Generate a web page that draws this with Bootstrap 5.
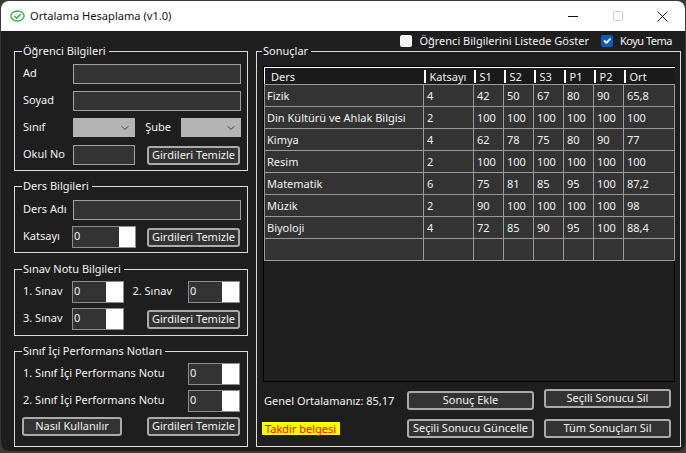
<!DOCTYPE html>
<html lang="tr">
<head>
  <meta charset="UTF-8">
  <title>Ortalama Hesaplama (v1.0)</title>
  <link href="https://cdn.jsdelivr.net/npm/bootstrap@5.3.0/dist/css/bootstrap.min.css" rel="stylesheet">
  <style>
    html, body { height: 100%; }
    body {
      background: #3d3a33;
      font-family: "Noto Sans", "Liberation Sans", sans-serif;
      font-size: 11px;
      line-height: 16px;
      color: #f2f2f2;
      overflow: hidden;
    }
    .app-window {
      width: 684px;
      height: 450px;
      margin: 1px 0 0 1px;
      background: #1e1e1e;
      border-radius: 8px;
      overflow: hidden;
    }
    .title-bar { height: 30px; background: #fff; color: #111; font-size: 11.1px; padding-left: 9px; }
    .title-text { margin-left: 5px; }
    .win-btn { width: 45px; height: 30px; }
    .client { padding: 0 4px 0 13px; }
    .top-options { height: 20px; margin-bottom: -8px; padding-right: 9px; gap: 12px; }
    .top-options .form-check-input {
      width: 12px; height: 12px; margin: 0 7px 0 0; border-radius: 2px; border: 0; background-color: #f4f4f4;
    }
    .top-options .form-check-input:checked { background-color: #0a5cb8; }
    .theme-label { letter-spacing: -.5px; }
    .left-col { width: 235px; }
    .right-col { width: 425px; margin-left: 8px; }
    .group-box {
      border: 1px solid #dcdcdc;
      margin: 0;
      padding: 5px 6px 5px 8px;
      min-width: 0;
    }
    .group-box legend {
      float: none;
      width: auto;
      font-size: 11px;
      line-height: 16px;
      margin: 0 0 0 -1px;
      padding: 0 3px 0 1px;
    }
    .box-lesson { margin-top: 7px; padding-top: 6px; padding-bottom: 4px; }
    .box-exam { margin-top: 8px; padding-top: 4px; }
    .box-perf { margin-top: 7px; padding-top: 4px; padding-bottom: 10px; }
    .group-stack { gap: 7px; }
    .group-stack.mid { gap: 6px; }
    .group-stack.tight { gap: 5px; }
    .group-stack span { padding-bottom: 2px; }
    .row-label { width: 50px; flex: none; }
    .dark-input.form-control {
      height: 20px; min-height: 0; padding: 0 2px; border-radius: 0; font-size: 11px; line-height: 16px;
      background: #333; border: 1px solid #a0a0a0; color: #f2f2f2;
    }
    .w-small { width: 62px; flex: none; }
    .w-small-b { width: 60px; flex: none; }
    .dark-select.form-select {
      height: 19px; padding: 0; margin-bottom: 1px; border: 0; border-radius: 0; background-color: #b4b4b4;
      background-size: 10px 8px; background-position: right 5px center;
    }
    .sube-label { margin: 0 10px 0 auto; }
    .spin-box { height: 22px; flex: none; border: 1px solid #8c8c8c; margin-left: -1px; background: #333; }
    .spin-box .form-control {
      height: 17px; min-height: 0; flex: 1 1 0; width: 0; padding: 0 1px; border: 0; border-radius: 0;
      font-size: 11px; line-height: 14px; background: #333; color: #f2f2f2; align-self: flex-start;
    }
    .spin-box i { display: block; width: 16px; background: #fff; }
    .spin-wide { width: 64px; }
    .spin-narrow { width: 52px; }
    .spin-box.spin-narrow i { width: 17px; }
    .spin-end { margin-right: 1px; margin-left: 0; }
    .push-r { margin-left: auto; }
    .act-btn.btn {
      height: 19px; padding: 0 0 2px; border: 2px solid #aaa; border-radius: 3px; background: #333;
      color: #f2f2f2; font-size: 11px; line-height: 13px; white-space: nowrap;
    }
    .btn-clear { width: 93px; margin-right: 1px; }
    .btn-help { width: 100px; margin-left: -1px; }
    .results-box { padding: 7px 5px 6px 6px; height: 404px; }
    .table-wrap { height: 316px; border: 1px solid #000; background: #1e1e1e; }
    .grade-table { table-layout: fixed; width: 410px; border-collapse: collapse; color: #f2f2f2; margin: 0; }
    .grade-table thead th {
      height: 17px; padding: 0 0 0 6px; font-weight: 400; font-size: 11px; line-height: 15px;
      background: linear-gradient(#fff, #fff) no-repeat 0 2px / 2px 13px, #1a1a1a;
      border-top: 1px solid #fff; border-bottom: 1px solid #999;
    }
    .grade-table thead th:first-child { padding-left: 6px; background: #1a1a1a; border-left: 1px solid #fff; }
    .grade-table tbody td {
      height: 22px; padding: 0 0 0 3px; background: #333; font-size: 11px; line-height: 16px;
      border: 1px solid #999; white-space: nowrap;
    }
    .grade-table tbody td:first-child { padding-left: 2px; }
    .bottom-bar { margin-top: 7px; }
    .info-col { width: 144px; padding-left: 1px; }
    .btn-col { width: 127px; margin-right: 10px; }
    .btn-col .act-btn { width: 127px; }
    .btn-col .act-btn + .act-btn { margin-top: 9px; }
    .btn-col.first-col { padding-top: 2px; }
    .btn-col.last-col .act-btn + .act-btn { margin-top: 11px; }
    .avg-text { margin-top: 4px; }
    .award-text { width: 78px; height: 13px; line-height: 13px; margin: 13px 0 0 -2px; padding-left: 3px; background: #ff0; color: #f00; white-space: nowrap; }
  </style>
</head>
<body>
  <div class="app-window">
    <div class="title-bar d-flex align-items-center">
      <svg width="15" height="12" viewBox="0 0 15 12"><ellipse cx="7.5" cy="6" rx="6.6" ry="5" fill="none" stroke="#35b04a" stroke-width="1.4"/><path d="M4.5 6l2.2 2.2 4-4.2" fill="none" stroke="#35b04a" stroke-width="1.5"/></svg>
      <span class="title-text">Ortalama Hesaplama (v1.0)</span>
      <div class="ms-auto d-flex">
        <div class="win-btn d-flex align-items-center justify-content-center"><svg width="10" height="10" viewBox="0 0 10 10"><path d="M0 5.5h10" stroke="#111"/></svg></div>
        <div class="win-btn d-flex align-items-center justify-content-center"><svg width="10" height="10" viewBox="0 0 10 10"><rect x=".5" y=".5" width="9" height="9" rx="1" fill="none" stroke="#ccc"/></svg></div>
        <div class="win-btn d-flex align-items-center justify-content-center"><svg width="11" height="11" viewBox="0 0 11 11"><path d="M.5.5l10 10M10.5.5l-10 10" stroke="#111"/></svg></div>
      </div>
    </div>
    <div class="client">
      <div class="top-options d-flex justify-content-end align-items-center">
        <div class="d-flex align-items-center">
          <input class="form-check-input" type="checkbox" id="showStudent">
          <label for="showStudent">Öğrenci Bilgilerini Listede Göster</label>
        </div>
        <div class="d-flex align-items-center">
          <input class="form-check-input" type="checkbox" id="darkTheme" checked>
          <label class="theme-label" for="darkTheme">Koyu Tema</label>
        </div>
      </div>
      <div class="d-flex">
        <div class="left-col d-flex flex-column">
          <fieldset class="group-box">
            <legend>Öğrenci Bilgileri</legend>
            <div class="group-stack d-flex flex-column">
              <div class="d-flex align-items-center"><span class="row-label">Ad</span><input class="form-control dark-input"></div>
              <div class="d-flex align-items-center"><span class="row-label">Soyad</span><input class="form-control dark-input"></div>
              <div class="d-flex align-items-center">
                <span class="row-label">Sınıf</span>
                <select class="form-select dark-select w-small"></select>
                <span class="sube-label">Şube</span>
                <select class="form-select dark-select w-small-b"></select>
              </div>
              <div class="d-flex align-items-center">
                <span class="row-label">Okul No</span>
                <input class="form-control dark-input w-small">
                <button class="btn act-btn btn-clear push-r">Girdileri Temizle</button>
              </div>
            </div>
          </fieldset>
          <fieldset class="group-box box-lesson">
            <legend>Ders Bilgileri</legend>
            <div class="group-stack mid d-flex flex-column">
              <div class="d-flex align-items-center"><span class="row-label">Ders Adı</span><input class="form-control dark-input"></div>
              <div class="d-flex align-items-center">
                <span class="row-label">Katsayı</span>
                <div class="spin-box spin-wide d-flex"><input class="form-control" value="0"><i></i></div>
                <button class="btn act-btn btn-clear push-r">Girdileri Temizle</button>
              </div>
            </div>
          </fieldset>
          <fieldset class="group-box box-exam">
            <legend>Sınav Notu Bilgileri</legend>
            <div class="group-stack tight d-flex flex-column">
              <div class="d-flex align-items-center">
                <span class="row-label">1. Sınav</span>
                <div class="spin-box spin-narrow d-flex"><input class="form-control" value="0"><i></i></div>
                <span class="ms-auto me-3">2. Sınav</span>
                <div class="spin-box spin-narrow spin-end d-flex"><input class="form-control" value="0"><i></i></div>
              </div>
              <div class="d-flex align-items-center">
                <span class="row-label">3. Sınav</span>
                <div class="spin-box spin-narrow d-flex"><input class="form-control" value="0"><i></i></div>
                <button class="btn act-btn btn-clear push-r">Girdileri Temizle</button>
              </div>
            </div>
          </fieldset>
          <fieldset class="group-box box-perf">
            <legend>Sınıf İçi Performans Notları</legend>
            <div class="group-stack tight d-flex flex-column">
              <div class="d-flex align-items-center justify-content-between">
                <span>1. Sınıf İçi Performans Notu</span>
                <div class="spin-box spin-narrow spin-end d-flex"><input class="form-control" value="0"><i></i></div>
              </div>
              <div class="d-flex align-items-center justify-content-between">
                <span>2. Sınıf İçi Performans Notu</span>
                <div class="spin-box spin-narrow spin-end d-flex"><input class="form-control" value="0"><i></i></div>
              </div>
              <div class="d-flex align-items-center justify-content-between">
                <button class="btn act-btn btn-help">Nasıl Kullanılır</button>
                <button class="btn act-btn btn-clear">Girdileri Temizle</button>
              </div>
            </div>
          </fieldset>
        </div>
        <div class="right-col">
          <fieldset class="group-box results-box">
            <legend>Sonuçlar</legend>
            <div class="table-wrap">
              <table class="grade-table">
                <colgroup><col style="width:159px"><col style="width:50px"><col style="width:30px"><col style="width:30px"><col style="width:30px"><col style="width:30px"><col style="width:30px"><col style="width:51px"></colgroup>
                <thead>
                  <tr><th>Ders</th><th>Katsayı</th><th>S1</th><th>S2</th><th>S3</th><th>P1</th><th>P2</th><th>Ort</th></tr>
                </thead>
                <tbody>
                  <tr><td>Fizik</td><td>4</td><td>42</td><td>50</td><td>67</td><td>80</td><td>90</td><td>65,8</td></tr>
                  <tr><td>Din Kültürü ve Ahlak Bilgisi</td><td>2</td><td>100</td><td>100</td><td>100</td><td>100</td><td>100</td><td>100</td></tr>
                  <tr><td>Kimya</td><td>4</td><td>62</td><td>78</td><td>75</td><td>80</td><td>90</td><td>77</td></tr>
                  <tr><td>Resim</td><td>2</td><td>100</td><td>100</td><td>100</td><td>100</td><td>100</td><td>100</td></tr>
                  <tr><td>Matematik</td><td>6</td><td>75</td><td>81</td><td>85</td><td>95</td><td>100</td><td>87,2</td></tr>
                  <tr><td>Müzik</td><td>2</td><td>90</td><td>100</td><td>100</td><td>100</td><td>100</td><td>98</td></tr>
                  <tr><td>Biyoloji</td><td>4</td><td>72</td><td>85</td><td>90</td><td>95</td><td>100</td><td>88,4</td></tr>
                  <tr><td></td><td></td><td></td><td></td><td></td><td></td><td></td><td></td></tr>
                </tbody>
              </table>
            </div>
            <div class="bottom-bar d-flex">
              <div class="info-col">
                <div class="avg-text">Genel Ortalamanız: 85,17</div>
                <div class="award-text">Takdir belgesi</div>
              </div>
              <div class="btn-col first-col d-flex flex-column">
                <button class="btn act-btn">Sonuç Ekle</button>
                <button class="btn act-btn">Seçili Sonucu Güncelle</button>
              </div>
              <div class="btn-col last-col d-flex flex-column me-0">
                <button class="btn act-btn">Seçili Sonucu Sil</button>
                <button class="btn act-btn">Tüm Sonuçları Sil</button>
              </div>
            </div>
          </fieldset>
        </div>
      </div>
    </div>
  </div>
  <script src="https://cdn.jsdelivr.net/npm/bootstrap@5.3.0/dist/js/bootstrap.bundle.min.js"></script>
</body>
</html>
